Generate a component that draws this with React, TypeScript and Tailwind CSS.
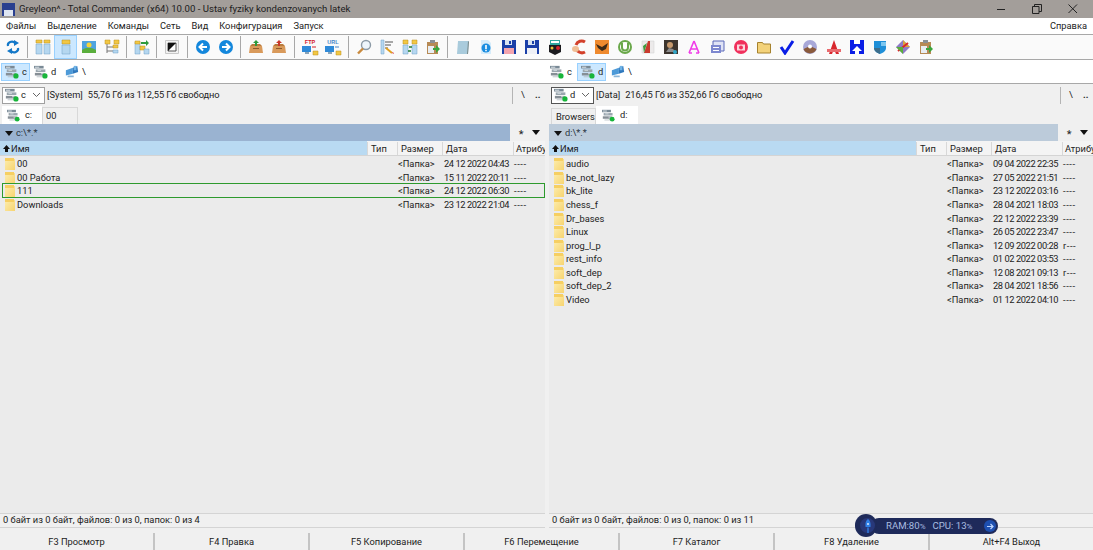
import React from "react";

const S = ({ children, w = 16, h = 16, vb = "0 0 16 16" }: { children: React.ReactNode; w?: number; h?: number; vb?: string }) => (
  <svg width={w} height={h} viewBox={vb} className="block shrink-0">{children}</svg>
);

const Drive = ({ w = 14 }: { w?: number }) => (
  <S w={w} h={w}>
    <path d="M0 1h11v3H0z" fill="#7a8a96" />
    <path d="M1 2h5v1H1z" fill="#e8eef2" />
    <path d="M2 5h11v3H2z" fill="#9aa6ae" />
    <path d="M1 9h11v3H1z" fill="#868f96" />
    <path d="M3 13h7v1H3z" fill="#b4bcc2" />
    <path d="M8 10h3M4 6h4" stroke="#dfe6ea" strokeWidth="1" />
    <circle cx="12.500" cy="12.500" r="3" fill="#18b53a" />
  </S>
);

const Net = () => (
  <S w={14} h={14}>
    <path d="M1 6l8-3v7l-8 2z" fill="#4d9ad8" />
    <path d="M9 3l5-2 1 7-6 2z" fill="#2f78bd" />
    <path d="M3 12h7v2H3z" fill="#8bb6d8" />
    <path d="M10 1h3v5h-3z" fill="#6fb3e6" />
  </S>
);

const Ring = ({ c, d }: { c: string; d: string }) => (
  <S>
    <circle cx="8" cy="8" r="7" fill={c} />
    <path d={d} stroke="#fff" strokeWidth="2" fill="none" />
  </S>
);

const Box = ({ arrow }: { arrow: string }) => (
  <S>
    <path d="M2 7h12l1 7H1z" fill="#d99a5b" />
    <path d="M5 9h6v1H5z" fill="#8c5a2b" />
    <path d="M2 7l2-2h8l2 2z" fill="#b97b3d" />
    <path d="M8 1l3 3H9v3H7V4H5z" fill={arrow} />
  </S>
);

const Yellow = ({ x, y, w = 5, h = 4 }: { x: number; y: number; w?: number; h?: number }) => (
  <path d={`M${x} ${y}h${w}v${h}h-${w}z`} fill="#f2c744" stroke="#b98e1e" strokeWidth=".5" />
);
const Blue = ({ x, y, w = 5, h = 4 }: { x: number; y: number; w?: number; h?: number }) => (
  <path d={`M${x} ${y}h${w}v${h}h-${w}z`} fill="#b5d7f0" stroke="#6e9fc4" strokeWidth=".5" />
);

const Remote = ({ label, c }: { label: string; c: string }) => (
  <S w={18} h={18} vb="0 0 18 18">
    <text x="9" y="6" textAnchor="middle" fontSize="5.500" fontWeight="700" fill={c} fontFamily="'Liberation Sans', sans-serif">{label}</text>
    <path d="M1 8h9v6H1z" fill="#2f8ad8" />
    <path d="M4 14h4v2H4z" fill="#8aa4b8" />
    <path d="M11 9h4" stroke={c} strokeWidth="1" />
    <path d="M12 13h5v4h-5z" fill="#f2c744" stroke="#b98e1e" strokeWidth=".5" />
  </S>
);

const Disk = ({ c, inner }: { c: string; inner: string }) => (
  <S>
    <path d="M1 1h14v14H1z" fill={c} />
    <path d="M4 1h7v5H4z" fill="#d9e4f2" />
    <path d="M8 2h2v3H8z" fill={c} />
    <path d="M3 9h10v6H3z" fill={inner} />
  </S>
);

const toolbarA: React.ReactNode[][] = [
  [<S key="a"><path d="M3 7a4 3.500 0 0 1 7-3M13 9a4 3.500 0 0 1-7 3" fill="none" stroke="#1478c8" strokeWidth="2.200" /><path d="M9 1l5 3-5 3zM7 9l-5 3 5 3z" fill="#1478c8" /></S>],
  [
    <S key="b"><Yellow x={1} y={1} w={6} h={3} /><Yellow x={9} y={1} w={6} h={3} /><Blue x={1} y={5} w={6} h={10} /><Blue x={9} y={5} w={6} h={10} /></S>,
    <S key="c"><Yellow x={4} y={1} w={8} h={4} /><Blue x={4} y={6} w={8} h={9} /></S>,
    <S key="d"><path d="M1 2h14v12H1z" fill="#4ea3e0" /><circle cx="8" cy="6" r="2.500" fill="#f5d33c" /><path d="M1 11c4-3 9-3 14 0v3H1z" fill="#5aae3c" /></S>,
    <S key="e"><Yellow x={1} y={1} /><Yellow x={10} y={1} /><path d="M3 5v9M3 8h6M3 12h6" stroke="#777" fill="none" /><Yellow x={9} y={6} w={5} h={3} /><Blue x={9} y={11} w={5} h={3} /></S>,
  ],
  [<S key="f"><Blue x={1} y={3} w={5} h={12} /><Yellow x={1} y={2} w={5} h={3} /><Yellow x={6} y={7} /><Blue x={10} y={10} w={5} h={5} /><path d="M7 3h5V1l3 3-3 3V5H7z" fill="#2e9a3c" /></S>],
  [<S key="g"><path d="M1.500 1.500h13v13h-13z" fill="#f2f2f2" stroke="#c8c8c8" /><path d="M4 4h8v8H4z" fill="#fff" stroke="#555" /><path d="M4 4h8L4 12z" fill="#111" /></S>],
  [
    <Ring key="h" c="#1487dc" d="M12 8H5M8 4.500L4.500 8 8 11.500" />,
    <Ring key="i" c="#1487dc" d="M4 8h7M8 4.500L11.500 8 8 11.500" />,
  ],
  [<Box key="j" arrow="#2e9a3c" />, <Box key="k" arrow="#c8392b" />],
  [<Remote key="l" label="FTP" c="#d3202a" />, <Remote key="m" label="URL" c="#4a86c8" />],
  [
    <S key="n"><circle cx="10" cy="6" r="4.500" fill="#eef5fb" stroke="#8c9aa6" strokeWidth="1.400" /><path d="M7 9.500L2 14.500" stroke="#c98a3e" strokeWidth="2.400" /></S>,
    <S key="o"><path d="M2 1h3v14H2z" fill="#b5d7f0" stroke="#6e9fc4" strokeWidth=".5" /><path d="M6 3h8M6 6h6M6 9h3" stroke="#555" /><path d="M7 9l6 5" stroke="#e0a020" strokeWidth="2" /><path d="M13 14l2 1-1-2z" fill="#d3202a" /></S>,
    <S key="p"><Yellow x={1} y={1} /><Yellow x={10} y={1} /><Blue x={1} y={6} w={5} h={9} /><Blue x={10} y={6} w={5} h={9} /><path d="M7 8h3M9 12H6" stroke="#1c7a2e" strokeWidth="1.300" /></S>,
    <S key="q"><path d="M2 3h11v12H2z" fill="#b78a55" /><path d="M5 1h5v3H5z" fill="#8a8f94" /><path d="M3 7h6v7H3z" fill="#e8edf2" /><path d="M8 9h3V6l4 4-4 4v-3H8z" fill="#3aa53c" /></S>,
  ],
  [
    <S key="r"><path d="M3 2h11l-1 13H2z" fill="#a9cbdc" /><path d="M13 2l1 1-1 12h-1z" fill="#7c8c8c" /></S>,
    <S key="s"><path d="M3 1h7l3 3v11H3z" fill="#d6ecfa" /><circle cx="8" cy="9" r="4.500" fill="#1b8de0" /><path d="M7.200 6h1.600v4.200H7.200zM7.200 11h1.600v1.300H7.200z" fill="#fff" /></S>,
    <Disk key="t" c="#1a3fa8" inner="#f3a4ae" />,
    <Disk key="u" c="#1a3fa8" inner="#eef0f6" />,
    <S key="v"><path d="M2 6l6-2 6 2v7l-6 3-6-3z" fill="#1b1b1f" /><path d="M3 1h10v5H3z" fill="#2fa6a0" /><path d="M4 2h8v2H4z" fill="#fff" /><circle cx="11" cy="9" r="2" fill="#d3202a" /><circle cx="5" cy="9" r="1.500" fill="#e6c13a" /></S>,
    <S key="w"><path d="M14 3A6 6 0 0 0 5 6" fill="none" stroke="#d3402a" strokeWidth="3" /><path d="M5 8a6 6 0 0 0 9 5" fill="none" stroke="#d3402a" strokeWidth="3" /><ellipse cx="4.500" cy="10" rx="3.500" ry="3" fill="#f0bd94" /></S>,
    <S key="x"><path d="M1 1h14v14H1z" fill="#ef8a2e" /><path d="M2 5l6 3 6-4-2 6-4 2-4-3z" fill="#3d2a18" /></S>,
    <S key="y"><circle cx="8" cy="8" r="7" fill="#6aa84a" /><circle cx="8" cy="8" r="5" fill="#fff" /><path d="M5 4v4.500a3 3 0 0 0 6 0V4" fill="none" stroke="#6aa84a" strokeWidth="2" /></S>,
    <S key="z"><path d="M2 2h12v12H2z" fill="#eceaea" stroke="#ccc" strokeWidth=".5" /><path d="M4 14L8 2h2v12z" fill="#c93a2e" /><path d="M4 14L7 4l-4 3z" fill="#3e9a3e" /></S>,
    <S key="aa"><path d="M1 1h14v14H1z" fill="#3d352e" /><circle cx="7" cy="6" r="3" fill="#c79a6e" /><path d="M3 13l3-4 4 1 3 3z" fill="#8c8c8c" /><circle cx="12" cy="13" r="2" fill="#2fa6c8" /></S>,
    <S key="ab"><path d="M8 2L3 14M8 2l5 12M5 10h6" fill="none" stroke="#f03ce8" strokeWidth="1.600" /><path d="M3 14h3M10 14h3" stroke="#f03ce8" strokeWidth="1.300" /></S>,
    <S key="ac"><path d="M3 2h11v10H3z" fill="#dfe3f5" stroke="#5a68b8" /><path d="M1 6h10v8H1z" fill="#7d88cf" /><path d="M3 8h6v1H3zM3 11h6v1H3z" fill="#fff" /></S>,
    <S key="ad"><circle cx="8" cy="8" r="7" fill="#f0305c" /><path d="M4 5.500h8v6H4z" fill="#fbd7dd" /><circle cx="8" cy="8.500" r="2" fill="#f0305c" /></S>,
    <S key="ae"><path d="M1.500 3.500h5l1 1.500h7v9h-13z" fill="#f3d27a" stroke="#a6822e" /></S>,
    <S key="af"><path d="M2 8l4 6L14 2" fill="none" stroke="#0a1ee6" strokeWidth="3" /></S>,
    <S key="ag"><circle cx="8" cy="8" r="7" fill="#a8a8d8" /><path d="M1.500 10a7 7 0 0 0 13 0L8 7z" fill="#8a5a3c" /><circle cx="8" cy="7.500" r="2" fill="#fff" /></S>,
    <S key="ah"><path d="M8 1L3 15h3l2-5 2 5h3z" fill="#d8262c" /><path d="M1 10h14v3H1z" fill="#e86a6e" /></S>,
    <S key="ai"><path d="M1 1h14v14H1z" fill="#0a1ee6" /><path d="M5 1h6v4H5z" fill="#fff" /><path d="M8 7l5 5h-3v3H6v-3H3z" fill="#fff" /></S>,
    <S key="aj"><path d="M2 2h12v7c0 3-3 5-6 6-3-1-6-3-6-6z" fill="#1f8fd8" /><path d="M2 9h6v6c-3-1-6-3-6-6z" fill="#3d6e8c" /><path d="M9 3h5v4H9z" fill="#7cc6ef" /></S>,
    <S key="ak"><path d="M8 1l7 7-7 7-7-7z" fill="#8e7ac8" /><path d="M8 1l7 7-7 0z" fill="#d8a63c" /><path d="M3 12L13 4" stroke="#d8262c" strokeWidth="2" /><path d="M1 8l7 7V8z" fill="#5aae3c" /></S>,
    <S key="al"><path d="M2 3h11v12H2z" fill="#b78a55" /><path d="M5 1h5v3H5z" fill="#8a8f94" /><path d="M3 7h6v7H3z" fill="#e8edf2" /><path d="M8 9h3V6l4 4-4 4v-3H8z" fill="#3aa53c" /></S>,
  ],
];

const Sep = ({ w }: { w: string }) => (
  <div className={`${w} h-[22px] flex justify-center shrink-0`}>
    <div className="w-px h-full bg-[#a8a8a8]" />
  </div>
);

const sepWidths = ["w-[7px]", "w-[7px]", "w-[7px]", "w-[8px]", "w-[7px]", "w-[8px]", "w-[8px]", "w-[7px]"];

function Toolbar() {
  return (
    <div className="h-[25px] bg-[#fafafa] flex items-center pl-px border-b border-[#a8a8a8] box-border">
      {toolbarA.map((group, gi) => (
        <React.Fragment key={gi}>
          {gi > 0 && <Sep w={sepWidths[gi - 1]} />}
          {group.map((ic, i) => (
            <div
              key={i}
              className={`${gi === 8 ? "w-[23.2px]" : "w-[23px]"} h-[24px] flex items-center justify-center shrink-0 ${gi === 1 && i === 1 ? "bg-[#cce8ff] border border-[#99d1ff]" : ""}`}
            >
              {ic}
            </div>
          ))}
        </React.Fragment>
      ))}
    </div>
  );
}

function DriveBar({ active, cWide, netGap }: { active: "c" | "d"; cWide?: boolean; netGap: string }) {
  const item = (l: "c" | "d", w: string, pad: string) => (
    <div className={`h-[18px] ${w} ${pad} flex items-center gap-[3px] border shrink-0 ${active === l ? "bg-[#cce8ff] border-[#99d1ff]" : "border-transparent"}`}>
      <Drive />
      <span>{l}</span>
    </div>
  );
  return (
    <div className="flex items-center h-full">
      {item("c", cWide ? "w-[31px]" : "w-[29px]", cWide ? "pl-[3px]" : "pl-[3px]")}
      {item("d", "w-[29px]", "pl-[3px]")}
      <div className={`flex items-center gap-[3px] ${netGap}`}>
        <Net />
        <span>\</span>
      </div>
    </div>
  );
}

function InfoBar({ drive, label, text, active }: { drive: string; label: string; text: string; active?: boolean }) {
  return (
    <div className="flex-1 min-w-0 flex items-center h-full">
      <div className={`ml-[2px] w-[43px] h-[17px] bg-white border flex items-center pl-[2px] shrink-0 ${active ? "border-[#555]" : "border-[#a0a0a0]"}`}>
        <Drive />
        <span className="ml-[2px]">{drive}</span>
        <svg width="9" height="6" viewBox="0 0 9 6" className="ml-auto mr-[3px]"><path d="M1 1l3.500 3.500L8 1" fill="none" stroke="#666" /></svg>
      </div>
      <span className="ml-[2px] whitespace-pre">{label}</span>
      <span className="ml-[5px] whitespace-pre tracking-[-0.08px]">{text}</span>
      <div className="ml-auto w-px h-[17px] bg-[#b4b4b4]" />
      <span className="ml-[8px] w-[14px]">\</span>
      <span className="w-[7px] mr-[3px] font-bold">..</span>
    </div>
  );
}

const FolderIc = () => (
  <svg width="10" height="13" viewBox="0 0 10 13" className="block shrink-0">
    <defs>
      <linearGradient id="fg" x1="0" x2="1" y1="0" y2="1">
        <stop offset="0" stopColor="#fdeeb0" />
        <stop offset="1" stopColor="#f7d470" />
      </linearGradient>
    </defs>
    <path d="M0 1h9v1h1v11H0z" fill="url(#fg)" />
    <path d="M0 1h9v3H0z" fill="#f6cf62" />
  </svg>
);

const cols = "grid grid-cols-[367px_30px_45px_71px_1fr]";

type Row = [string, string, string];

function Panel({ path, active, rows, cursor, status, tabs }: { path: string; active?: boolean; rows: Row[]; cursor?: number; status: string; tabs: React.ReactNode }) {
  return (
    <div className="flex-1 min-w-0 flex flex-col">
      <div className="h-[18px] flex items-end shrink-0">{tabs}</div>
      <div className="h-[17px] flex shrink-0">
        <div className={`flex-1 flex items-center pl-[5px] ${active ? "bg-[#9ab3d1] text-[#2a3440]" : "bg-[#bccbda] text-[#2a3440]"}`}>
          <svg width="8" height="5" viewBox="0 0 8 5" className="mr-[3px] mt-[2px]"><path d="M0 0h8L4 5z" fill="#111" /></svg>
          <span>{path}</span>
        </div>
        <div className="w-[32px] ml-[3px] flex items-center bg-[#f0f0f0]">
          <span className="w-[16px] text-center text-[11px] leading-none pt-[3px]">*</span>
          <svg width="8" height="5" viewBox="0 0 8 5" className="ml-[3px]"><path d="M0 0h8L4 5z" fill="#111" /></svg>
        </div>
      </div>
      <div className={`${cols} h-[15px] pt-px shrink-0 bg-[#f4f4f4] border-b border-[#d4d4d4] overflow-hidden`}>
        <div className="bg-[#b9daf2] flex items-center pl-[3px] gap-[1px] -mt-px">
          <svg width="7" height="7" viewBox="0 0 7 7"><path d="M3.500 0L7 4H5v3H2V4H0z" fill="#111" /></svg>
          <span className="pt-px">Имя</span>
        </div>
        <div className="flex items-center pl-[3px] border-l border-[#d8d8d8]">Тип</div>
        <div className="flex items-center pl-[3px] border-l border-[#d8d8d8]">Размер</div>
        <div className="flex items-center pl-[3px] border-l border-[#d8d8d8]">Дата</div>
        <div className="flex items-center pl-[2px] border-l border-[#d8d8d8] whitespace-nowrap overflow-hidden">Атрибуты</div>
      </div>
      <div className="flex-1 bg-[#ebebeb] border-b border-[#d4d4d4] pt-px min-h-0">
        {rows.map((r, i) => (
          <div key={r[0]} className={`${cols} h-[13.6px] items-center relative leading-none whitespace-nowrap`}>
            {cursor === i && <div className="absolute left-[2px] right-0 top-[-1px] h-[15px] border border-[#2d9a2d]" />}
            <div className="flex items-center pl-[5px] gap-[2px]">
              <FolderIc />
              <span>{r[0]}</span>
            </div>
            <div />
            <div className="pl-px">&lt;Папка&gt;</div>
            <div className="pl-[2px] tracking-[-0.42px]">{r[1]}</div>
            <div className="pl-px tracking-[0.6px]">{r[2]}</div>
          </div>
        ))}
      </div>
      <div className="h-[14px] flex items-center pl-[3px] pb-px shrink-0 border-b border-[#d4d4d4]">{status}</div>
    </div>
  );
}

const leftRows: Row[] = [
  ["00", "24 12 2022 04:43", "----"],
  ["00 Работа", "15 11 2022 20:11", "----"],
  ["111", "24 12 2022 06:30", "----"],
  ["Downloads", "23 12 2022 21:04", "----"],
];
const rightRows: Row[] = [
  ["audio", "09 04 2022 22:35", "----"],
  ["be_not_lazy", "27 05 2022 21:51", "----"],
  ["bk_lite", "23 12 2022 03:16", "----"],
  ["chess_f", "28 04 2021 18:03", "----"],
  ["Dr_bases", "22 12 2022 23:39", "----"],
  ["Linux", "26 05 2022 23:47", "----"],
  ["prog_l_p", "12 09 2022 00:28", "r---"],
  ["rest_info", "01 02 2022 03:53", "----"],
  ["soft_dep", "12 08 2021 09:13", "r---"],
  ["soft_dep_2", "28 04 2021 18:56", "----"],
  ["Video", "01 12 2022 04:10", "----"],
];

const menu = ["Файлы", "Выделение", "Команды", "Сеть", "Вид", "Конфигурация", "Запуск"];
const fkeys = ["F3 Просмотр", "F4 Правка", "F5 Копирование", "F6 Перемещение", "F7 Каталог", "F8 Удаление", "Alt+F4 Выход"];

export default function App() {
  return (
    <div className="relative w-[1093px] h-[550px] overflow-hidden bg-[#f0f0f0] flex flex-col text-[#222] text-[9.3px] leading-none font-['Roboto',sans-serif]">
      <div className="h-[18px] bg-[#a39e9a] flex items-center shrink-0">
        <div className="w-[13px] h-[13px] ml-[2px] bg-[#2a3f8f] flex items-end justify-center shrink-0">
          <div className="w-[9px] h-[6px] bg-[#dfe6f2]" />
        </div>
        <span className="ml-[4px] text-[#1c1c1c] text-[9.6px]">Greyleon^ - Total Commander (x64) 10.00 - Ustav fyziky kondenzovanych latek</span>
        <div className="ml-auto mr-[2px] flex items-center">
          <div className="w-[36px] flex justify-center"><svg width="10" height="10" viewBox="0 0 10 10"><path d="M1 5.500h8" stroke="#222" /></svg></div>
          <div className="w-[36px] flex justify-center"><svg width="10" height="10" viewBox="0 0 10 10"><path d="M.5 2.500h6.500v7H.5zM2.500 2.500v-2h7v7H7" fill="none" stroke="#222" /></svg></div>
          <div className="w-[36px] flex justify-center"><svg width="10" height="10" viewBox="0 0 10 10"><path d="M.5.500l8.500 8.500M9 .500L.5 9" stroke="#222" /></svg></div>
        </div>
      </div>
      <div className="h-[17px] bg-white border-b border-[#a8a8a8] flex items-center pl-[6px] shrink-0">
        {menu.map((m) => (
          <span key={m} className="mr-[11px]">{m}</span>
        ))}
        <span className="ml-auto mr-[6px]">Справка</span>
      </div>
      <Toolbar />
      <div className="h-[24px] bg-white border-b border-[#a8a8a8] flex items-center shrink-0">
        <div className="w-[546px] pl-px h-full"><DriveBar active="c" netGap="ml-[6px]" /></div>
        <div className="flex-1 h-full"><DriveBar active="d" cWide netGap="ml-[5px]" /></div>
      </div>
      <div className="h-[22px] flex items-center shrink-0">
        <div className="w-[545px] h-full flex"><InfoBar drive="c" label="[System]" text="55,76 Гб из 112,55 Гб свободно" /></div>
        <div className="w-[4px]" />
        <div className="flex-1 h-full flex"><InfoBar drive="d" label="[Data]" text="216,45 Гб из 352,66 Гб свободно" active /></div>
      </div>
      <div className="flex-1 flex min-h-0 gap-[4px]">
        <div className="w-[545px] flex">
          <Panel
            active
            path="c:\*.*"
            rows={leftRows}
            cursor={2}
            status="0 байт из 0 байт, файлов: 0 из 0, папок: 0 из 4"
            tabs={
              <>
                <div className="ml-[2px] w-[40px] h-[18px] bg-white flex items-center gap-[5px] pl-[5px]"><Drive w={13} /><span>c:</span></div>
                <div className="w-[36px] h-[17px] bg-[#f0f0f0] border border-[#d8d8d8] border-b-0 flex items-center pl-[3px]">00</div>
              </>
            }
          />
        </div>
        <div className="flex-1 flex min-w-0">
          <Panel
            path="d:\*.*"
            rows={rightRows}
            status="0 байт из 0 байт, файлов: 0 из 0, папок: 0 из 11"
            tabs={
              <>
                <div className="ml-[2px] w-[45px] h-[16px] bg-[#f0f0f0] border border-[#d8d8d8] border-b-0 flex items-center pl-[4px]">Browsers</div>
                <div className="w-[42px] h-[18px] bg-white flex items-center gap-[5px] pl-[6px]"><Drive w={13} /><span>d:</span></div>
              </>
            }
          />
        </div>
      </div>
      <div className="h-[22px] pt-[5px] flex shrink-0">
        {fkeys.map((k, i) => (
          <div key={k} className={`h-[17px] flex items-center justify-center ${i === 6 ? "flex-1" : "w-[155px] border-r-2 border-[#c4c4c4]"}`}>{k}</div>
        ))}
      </div>
      <div className="absolute left-[855px] top-[514px] w-[143px] h-[23px] flex items-center">
        <div className="absolute left-[16px] right-0 top-[4px] h-[16px] bg-[#1e2a5a] rounded-full" />
        <div className="absolute left-0 top-0 w-[22px] h-[23px] bg-[#1e2a5a] rounded-full" />
        <div className="absolute left-[5px] top-[4px] w-[15px] h-[15px] rounded-full bg-[#28387a] flex items-center justify-center">
          <svg width="8" height="14" viewBox="0 0 8 14"><path d="M4 0c2 1.500 3 4 2.500 8h-5C1 4 2 1.500 4 0zM3.300 8.500h1.400V14H3.300z" fill="#2f7fe6" /><circle cx="4" cy="5" r="1" fill="#dbe9ff" /></svg>
        </div>
        <div className="relative ml-[31px] text-[#a9bde0] text-[9.6px] whitespace-pre">RAM:80<span className="text-[8px]">%</span><span className="ml-[7px]">CPU: 13</span><span className="text-[8px]">%</span></div>
        <div className="absolute right-[2px] top-[6px] w-[12px] h-[12px] rounded-full bg-[#1d4fb0] flex items-center justify-center">
          <svg width="9" height="9" viewBox="0 0 9 9"><path d="M1 4.500h6M4.500 2L7 4.500 4.500 7" fill="none" stroke="#bcd4ff" strokeWidth="1.200" /></svg>
        </div>
      </div>
    </div>
  );
}
